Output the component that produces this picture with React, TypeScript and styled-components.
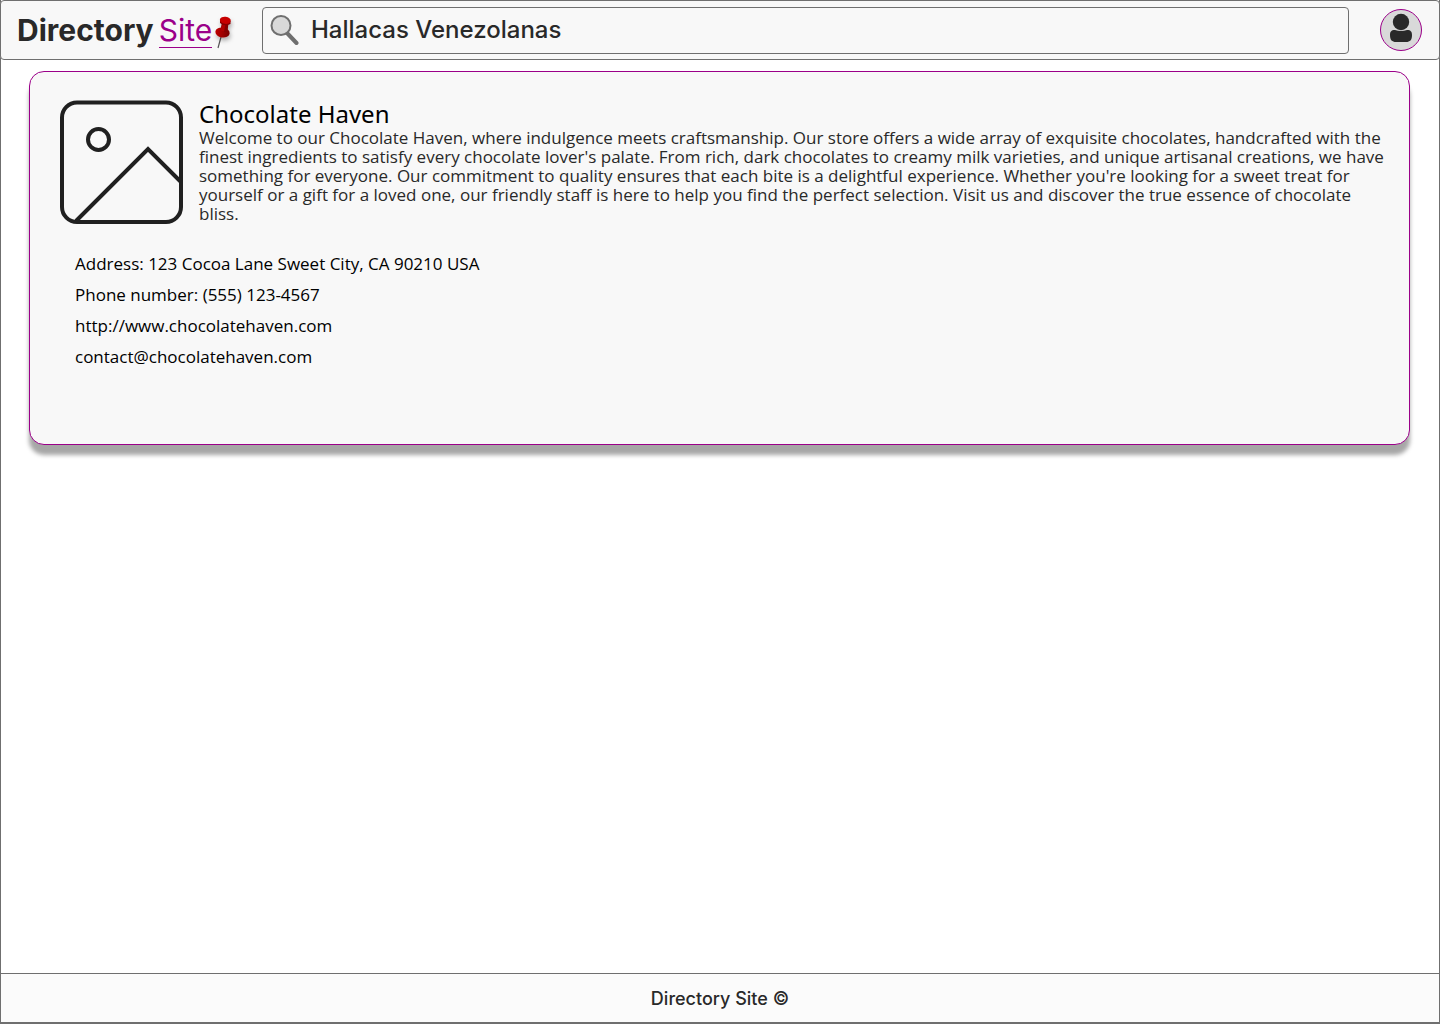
import React from "react";
import styled, { createGlobalStyle } from "styled-components";

const ink = "#292929";
const line = "#6f6f6f";
const accent = "#9b0089";

const GlobalStyle = createGlobalStyle`
  *, *::before, *::after { box-sizing: border-box; }
  body { margin: 0; background: #fff; color: ${ink}; font-family: "Open Sans", "Noto Sans", sans-serif; }
  a { color: inherit; text-decoration: none; }
`;

const Page = styled.div`
  min-height: 100vh;
  display: flex;
  flex-direction: column;
  border: 1px solid ${line};
  border-top: 0;
  border-bottom-width: 2px;
`;

const Header = styled.header`
  display: flex;
  align-items: center;
  height: 60px;
  margin: 0 -1px;
  padding: 0 17px 0 16px;
  background: #f8f8f8;
  border: 1px solid ${line};
  border-radius: 4px;
`;

const Logo = styled.a`
  flex: none;
  display: flex;
  align-items: center;
  width: 245px;
  gap: 5px;
  font: 700 30px/32px Inter, sans-serif;
`;

const LogoAccent = styled.span`
  display: flex;
  align-items: flex-start;
  gap: 1px;
  padding-top: 4px;
  color: ${accent};
  font-weight: 400;

  svg {
    margin-top: 1px;
  }
`;

const LogoWord = styled.span`
  padding-bottom: 1px;
  border-bottom: 1px solid ${accent};
`;

const Search = styled.label`
  flex: 1;
  display: flex;
  align-items: center;
  height: 47px;
  gap: 12px;
  padding: 0 7px;
  border: 1px solid ${line};
  border-radius: 4px;
`;

const SearchInput = styled.input`
  flex: 1;
  min-width: 0;
  padding: 0;
  border: 0;
  outline: 0;
  background: transparent;
  color: ${ink};
  font: 500 24px/30px Inter, sans-serif;
`;

const Avatar = styled.button`
  flex: none;
  display: flex;
  width: 42px;
  height: 42px;
  margin-left: 31px;
  padding: 0;
  border: 1px solid ${accent};
  border-radius: 50%;
  background: #d9d9d9;
`;

const Main = styled.main`
  flex: 1;
  padding: 11px 29px 11px 28px;
`;

const Card = styled.article`
  min-height: 374px;
  padding: 28px 14px 28px 30px;
  background: #f8f8f8;
  border: 1px solid ${accent};
  border-radius: 15px;
  box-shadow: 0 10px 4px rgba(0, 0, 0, 0.35);
`;

const Intro = styled.div`
  display: flex;
  align-items: flex-start;
  gap: 15px;
`;

const Picture = styled.svg`
  flex: none;
  width: 124px;
  height: 124px;
`;

const Title = styled.h1`
  margin: 0;
  color: #000;
  font-family: "Noto Sans", sans-serif;
  font-size: 24px;
  font-weight: 400;
  line-height: 28px;
`;

const Description = styled.p`
  margin: 0;
  font-size: 17px;
  line-height: 19px;
`;

const Contact = styled.address`
  display: flex;
  flex-direction: column;
  align-items: flex-start;
  gap: 12px;
  margin: 30px 0 0 15px;
  color: #000;
  font-size: 17px;
  font-style: normal;
  line-height: 19px;
`;

const Footer = styled.footer`
  display: flex;
  align-items: center;
  justify-content: center;
  height: 49px;
  padding-top: 2px;
  border-top: 1px solid ${line};
  background: #fbfbfb;
  font: 500 18px/22px Inter, sans-serif;
`;

function PinIcon() {
  return (
    <svg width="22" height="36" viewBox="0 0 22 36" aria-hidden="true">
      <defs>
        <linearGradient id="pin" x1="0" x2="1">
          <stop offset="0" stopColor="#c00000" />
          <stop offset=".5" stopColor="#a00000" />
          <stop offset="1" stopColor="#760000" />
        </linearGradient>
        <filter id="pinShadow" x="-50%" y="-30%" width="200%" height="170%">
          <feDropShadow dx="1" dy="3" stdDeviation="2" floodOpacity=".3" />
        </filter>
      </defs>
      <path d="M8 22L5 33" stroke="#555" strokeWidth="1.2" />
      <g filter="url(#pinShadow)">
        <ellipse cx="9.500" cy="17.500" rx="7.200" ry="5" transform="rotate(9 9.500 17.500)" fill="url(#pin)" />
        <path d="M9 7L7.500 15Q10 18 14.500 16.500L15.500 8Z" fill="#850000" />
        <path d="M9.500 9L7.500 15Q9 17 11 16.500L12.500 9Z" fill="#b00000" />
        <path d="M7 5V8Q11 12 17.500 9V6Z" fill="#850000" />
        <ellipse cx="12.300" cy="5.300" rx="5.500" ry="3.600" transform="rotate(8 12.300 5.300)" fill="#c70000" />
      </g>
    </svg>
  );
}

function SearchIcon() {
  return (
    <svg width="29" height="32" viewBox="0 0 29 32" aria-hidden="true">
      <path d="M17.500 19.500L26.500 29" stroke={line} strokeWidth="4" strokeLinecap="round" />
      <circle cx="11" cy="11.500" r="9.500" fill="#d9d9d9" stroke={line} strokeWidth="2" />
    </svg>
  );
}

export default function App() {
  return (
    <>
      <GlobalStyle />
      <Page>
        <Header>
          <Logo href="#" aria-label="Directory Site">
            <span>Directory</span>
            <LogoAccent>
              <LogoWord>Site</LogoWord>
              <PinIcon />
            </LogoAccent>
          </Logo>
          <Search>
            <SearchIcon />
            <SearchInput type="text" aria-label="Search" defaultValue="Hallacas Venezolanas" />
          </Search>
          <Avatar type="button" aria-label="Account">
            <svg width="40" height="40" viewBox="0 0 40 40" aria-hidden="true">
              <circle cx="20" cy="12" r="8.200" fill={ink} />
              <path d="M14 20Q20 22 26 20C30 20 31 22 31 25C31 30 29 32 25 32H15C11 32 9 30 9 25C9 22 10 20 14 20Z" fill={ink} />
            </svg>
          </Avatar>
        </Header>
        <Main>
          <Card>
            <Intro>
              <Picture viewBox="0 0 124 124" fill="none" stroke="#202020" strokeWidth="4" aria-hidden="true">
                <rect x="2" y="2.500" width="119" height="119.500" rx="15" />
                <circle cx="38.500" cy="39.500" r="10.500" />
                <path d="M16 121L88 49L121 82" />
              </Picture>
              <div>
                <Title>Chocolate Haven</Title>
                <Description>
                  Welcome to our Chocolate Haven, where indulgence meets craftsmanship. Our store offers a wide array of
                  exquisite chocolates, handcrafted with the finest ingredients to satisfy every chocolate lover's palate.
                  From rich, dark chocolates to creamy milk varieties, and unique artisanal creations, we have something
                  for everyone. Our commitment to quality ensures that each bite is a delightful experience. Whether
                  you're looking for a sweet treat for yourself or a gift for a loved one, our friendly staff is here to
                  help you find the perfect selection. Visit us and discover the true essence of chocolate bliss.
                </Description>
              </div>
            </Intro>
            <Contact>
              <span>Address: 123 Cocoa Lane Sweet City, CA 90210 USA</span>
              <span>Phone number: (555) 123-4567</span>
              <a href="http://www.chocolatehaven.com">http://www.chocolatehaven.com</a>
              <a href="mailto:contact@chocolatehaven.com">contact@chocolatehaven.com</a>
            </Contact>
          </Card>
        </Main>
        <Footer>Directory Site ©</Footer>
      </Page>
    </>
  );
}
